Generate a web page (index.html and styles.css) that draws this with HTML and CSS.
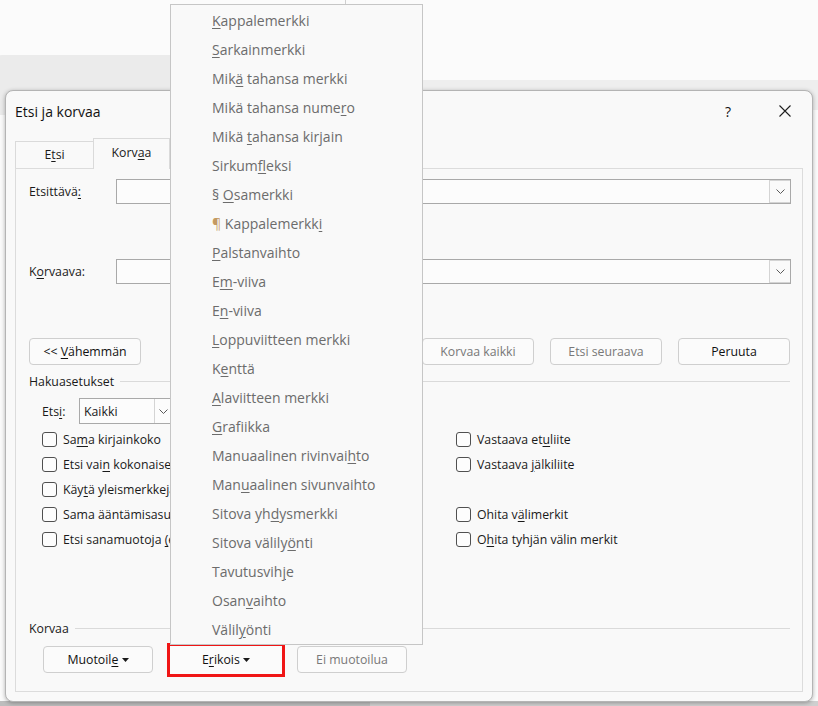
FILE: index.html
```html
<!DOCTYPE html>
<html lang="fi">
<head>
<meta charset="utf-8">
<title>Etsi ja korvaa</title>
<link rel="stylesheet" href="styles.css">
</head>
<body>
<div class="backwin backwin-left"></div>
<div class="backwin backwin-right"></div>
<div class="backline"></div>
<div class="floor floor-dark"></div>
<div class="floor floor-light"></div>

<div class="dialog">
  <div class="titlebar">
    <span class="title">Etsi ja korvaa</span>
    <span class="tb-help">?</span>
    <span class="tb-close"><svg width="12" height="12" viewBox="0 0 12 12"><path d="M0.5 0.5L11.5 11.5M11.5 0.5L0.5 11.5" stroke="#1f1f1f" stroke-width="1.1" fill="none"/></svg></span>
  </div>
  <div class="tabs">
    <div class="tab">E<u>t</u>si</div>
    <div class="tab tab-active">Korv<u>a</u>a</div>
  </div>
  <div class="panel">
    <div class="field-row">
      <label class="flabel">Etsittävä<u>:</u></label>
      <div class="combo"><span class="combo-btn"><svg width="9" height="5" viewBox="0 0 9 5"><polyline points="0.5,0.5 4.5,4.5 8.5,0.5" fill="none" stroke="#5a5a5a"/></svg></span></div>
    </div>
    <div class="field-row field-row-2">
      <label class="flabel">K<u>o</u>rvaava:</label>
      <div class="combo"><span class="combo-btn"><svg width="9" height="5" viewBox="0 0 9 5"><polyline points="0.5,0.5 4.5,4.5 8.5,0.5" fill="none" stroke="#5a5a5a"/></svg></span></div>
    </div>
    <div class="btn-row">
      <button class="btn">&lt;&lt; <u>V</u>ähemmän</button>
      <div class="btn-group">
        <button class="btn btn-dis"><u>K</u>orvaa</button>
        <button class="btn btn-dis">Korvaa kaikki</button>
        <button class="btn btn-dis">Etsi seuraava</button>
        <button class="btn">Peruuta</button>
      </div>
    </div>
    <div class="section-head"><span class="sh-text">Hakuasetukset</span><span class="rule"></span></div>
    <div class="search-row">
      <label class="slabel">Ets<u>i</u>:</label>
      <div class="select"><span class="select-text">Kaikki</span><span class="select-btn"><svg width="9" height="5" viewBox="0 0 9 5"><polyline points="0.5,0.5 4.5,4.5 8.5,0.5" fill="none" stroke="#5a5a5a"/></svg></span></div>
    </div>
    <div class="checks">
      <div class="chk"><span class="box"></span>Sa<u>m</u>a kirjainkoko</div>
      <div class="chk"><span class="box"></span>Vastaava et<u>u</u>liite</div>
      <div class="chk"><span class="box"></span>Etsi vai<u>n</u> kokonaiset sanat</div>
      <div class="chk"><span class="box"></span>Vastaava <u>j</u>älkiliite</div>
      <div class="chk"><span class="box"></span>Käy<u>t</u>ä yleismerkkejä</div>
      <div class="chk"></div>
      <div class="chk"><span class="box"></span>Sama ääntämisasu (englanti)</div>
      <div class="chk"><span class="box"></span>Ohita v<u>ä</u>limerkit</div>
      <div class="chk"><span class="box"></span>Etsi sanamuotoja <u>(</u>englanti)</div>
      <div class="chk"><span class="box"></span>O<u>h</u>ita tyhjän välin merkit</div>
    </div>
    <div class="section-head section-korvaa"><span class="sh-text">Korvaa</span><span class="rule"></span></div>
    <div class="bottom-row">
      <button class="btn btn-sm">Muotoil<u>e</u> <svg class="tri" width="7" height="4" viewBox="0 0 7 4"><path d="M0 0H7L3.5 4Z" fill="#1a1a1a"/></svg></button>
      <button class="btn btn-sm btn-marked">E<u>r</u>ikois <svg class="tri" width="7" height="4" viewBox="0 0 7 4"><path d="M0 0H7L3.5 4Z" fill="#1a1a1a"/></svg></button>
      <button class="btn btn-sm btn-dis">Ei muotoilua</button>
    </div>
  </div>
</div>

<ul class="menu">
  <li><u>K</u>appalemerkki</li>
  <li><u>S</u>arkainmerkki</li>
  <li>Mik<u>ä</u> tahansa merkki</li>
  <li>Mikä tahansa nume<u>r</u>o</li>
  <li>Mikä <u>t</u>ahansa kirjain</li>
  <li>Sirkum<u>f</u>leksi</li>
  <li>§ <u>O</u>samerkki</li>
  <li><span class="pilcrow">¶</span> Kappalemerkk<u>i</u></li>
  <li><u>P</u>alstanvaihto</li>
  <li>E<u>m</u>-viiva</li>
  <li>E<u>n</u>-viiva</li>
  <li><u>L</u>oppuviitteen merkki</li>
  <li>K<u>e</u>nttä</li>
  <li><u>A</u>laviitteen merkki</li>
  <li><u>G</u>rafiikka</li>
  <li>Manuaalinen rivinvai<u>h</u>to</li>
  <li>Man<u>u</u>aalinen sivunvaihto</li>
  <li>Sitova yh<u>d</u>ysmerkki</li>
  <li>Sitova välily<u>ö</u>nti</li>
  <li>Tavutusvih<u>j</u>e</li>
  <li>Osan<u>v</u>aihto</li>
  <li>Välil<u>y</u>önti</li>
</ul>
</body>
</html>
```
FILE: styles.css
```css
* { box-sizing: border-box; }

html, body {
  margin: 0;
  padding: 0;
}

body {
  position: relative;
  width: 818px;
  height: 706px;
  overflow: hidden;
  background: #fbfbfb;
  font-family: "Open Sans", "Noto Sans", sans-serif;
  font-size: 12.3px;
  color: #1a1a1a;
}

u { text-decoration: underline; text-underline-offset: 2px; text-decoration-thickness: 1px; }

/* desktop backdrop */
.backwin {
  position: absolute;
  background: #ebebeb;
}
.backwin-left {
  left: -12px;
  top: 55px;
  width: 200px;
  height: 60px;
  border-radius: 14px 14px 0 0;
}
.backwin-right {
  left: 420px;
  top: 80px;
  width: 398px;
  height: 30px;
  background: #eeeeee;
}
.backline {
  position: absolute;
  left: 345px;
  top: 0;
  width: 1px;
  height: 5px;
  background: #cfcfcf;
}
.floor {
  position: absolute;
  top: 701px;
  height: 5px;
}
.floor-dark { left: 0; width: 370px; background: #bdbdbd; }
.floor-light { left: 370px; width: 448px; background: #cfcfcf; }

/* dialog window */
.dialog {
  position: absolute;
  left: 5px;
  top: 90px;
  width: 808px;
  height: 612px;
  background: #f9f9f9;
  border: 1px solid #b4b4b4;
  border-radius: 8px;
  box-shadow: 0 1px 4px rgba(0, 0, 0, 0.3);
  display: flex;
  flex-direction: column;
  padding: 0 9px 9px 9px;
}

.titlebar {
  height: 40px;
  display: flex;
  align-items: center;
  font-size: 14px;
  color: #111;
}
.title { flex: 1; }
.tb-help {
  font-size: 14px;
  margin-right: 48px;
}
.tb-close {
  display: flex;
  margin-right: 12px;
}

.tabs {
  margin-top: 6px;
  height: 31px;
  display: flex;
  align-items: flex-end;
}
.tab {
  height: 27px;
  width: 79px;
  border: 1px solid #dadada;
  border-bottom: none;
  background: #f9f9f9;
  text-align: center;
  line-height: 26px;
}
.tab-active {
  position: relative;
  z-index: 1;
  height: 31px;
  width: 77px;
  margin-left: -1px;
  margin-bottom: -1px;
  line-height: 27px;
}

.panel {
  flex: 1;
  border: 1px solid #dcdcdc;
  padding: 10px 11px 0 13px;
  display: flex;
  flex-direction: column;
}

.field-row {
  display: grid;
  grid-template-columns: 87px 1fr;
  align-items: center;
  height: 25px;
}
.field-row-2 { margin-top: 55px; }
.flabel { padding-bottom: 1px; }

.combo {
  height: 25px;
  border: 1px solid #a9a9a9;
  background: #fcfcfc;
  display: flex;
  justify-content: flex-end;
}
.combo-btn {
  width: 21px;
  height: 23px;
  border: 1px solid #d4d4d4;
  border-right: none;
  background: #fafafa;
  display: flex;
  align-items: center;
  justify-content: center;
}

.btn-row {
  margin-top: 54px;
  display: flex;
  align-items: center;
}
.btn-group {
  margin-left: auto;
  margin-right: 1px;
  display: flex;
  gap: 16px;
}
.btn {
  display: block;
  height: 27px;
  width: 112px;
  border: 1px solid #cfcfcf;
  border-radius: 4px;
  background: #fbfbfb;
  font-family: inherit;
  font-size: 12.3px;
  color: #111;
  padding: 0;
  text-align: center;
  white-space: nowrap;
}
.btn-dis { color: #787878; }

.section-head {
  margin-top: 8px;
  height: 16px;
  display: flex;
  align-items: center;
  gap: 6px;
}
.section-head .rule {
  flex: 1;
  height: 1px;
  background: #dadada;
  margin-right: 1px;
}

.search-row {
  margin-top: 9px;
  padding-left: 13px;
  display: flex;
  align-items: center;
  height: 26px;
}
.slabel { width: 37px; }
.select {
  width: 93px;
  height: 26px;
  border: 1px solid #a9a9a9;
  background: #fcfcfc;
  display: flex;
  align-items: center;
}
.select-text { flex: 1; padding-left: 4px; }
.select-btn {
  width: 17px;
  height: 24px;
  border-left: 1px solid #d4d4d4;
  display: flex;
  align-items: center;
  justify-content: center;
}

.checks {
  margin-top: 3px;
  padding-left: 13px;
  display: grid;
  grid-template-columns: 414px 1fr;
  grid-auto-rows: 25px;
}
.chk {
  line-height: 25px;
  white-space: nowrap;
  overflow: hidden;
}
.box {
  display: inline-block;
  vertical-align: middle;
  width: 15px;
  height: 15px;
  border: 1px solid #505050;
  border-radius: 3px;
  background: #fdfdfd;
  margin: -2px 6px 0 0;
}

.section-korvaa { margin-top: 68px; }

.bottom-row {
  margin-top: 10px;
  padding-left: 14px;
  display: flex;
  align-items: center;
  height: 27px;
}
.btn-sm { width: 110px; }
.btn-marked {
  width: 118px;
  height: 34px;
  margin-left: 14px;
  margin-right: 12px;
  border: 3px solid #f01515;
  border-radius: 0;
  background: #fbfbfb;
}
.tri { vertical-align: middle; margin-top: -2px; }

/* dropdown menu overlay */
.menu {
  position: absolute;
  left: 170px;
  top: 4px;
  width: 253px;
  height: 641px;
  margin: 0;
  padding: 1px 0;
  list-style: none;
  background: #f9f9f9;
  border: 1px solid #c6c6c6;
  font-size: 14px;
  color: #6c6c6c;
}
.menu li {
  display: block;
  height: 29px;
  line-height: 29px;
  padding-left: 41px;
  white-space: nowrap;
}
.pilcrow { color: #c49a62; }
```
